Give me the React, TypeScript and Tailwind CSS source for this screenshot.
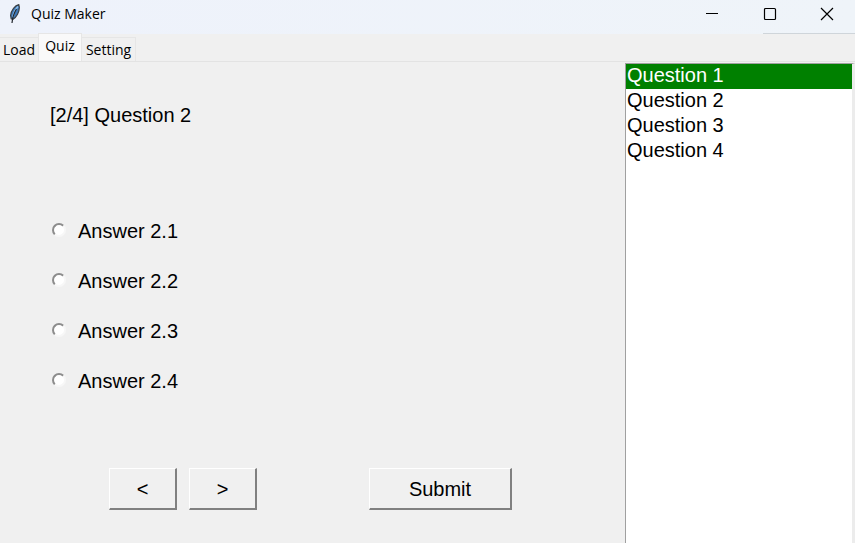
import { useState } from "react";

const answers = ["Answer 2.1", "Answer 2.2", "Answer 2.3", "Answer 2.4"];
const questions = ["Question 1", "Question 2", "Question 3", "Question 4"];

const raised =
  "h-[42px] border-t border-r-2 border-b-2 border-l border-t-white border-l-white border-r-[#808080] border-b-[#808080] bg-[#f0f0f0] text-xl";

function Feather() {
  return (
    <svg width="14" height="20" viewBox="0 0 14 20" aria-hidden="true">
      <path d="M10.800 0.700C7 1.500 3.200 6 2.600 11.500l.6 3.200 1.800 .6C8.500 13 11.500 8 11.300 3z" fill="#3d78b8" stroke="#3a4046" strokeWidth="1.200" />
      <path d="M10 2.500C7.500 5 6 8 4.800 13" fill="none" stroke="#8fc0ee" strokeWidth="1.600" />
      <path d="M8.500 5C6 9 4.600 12 4 19" fill="none" stroke="#20252b" strokeWidth="1.200" />
    </svg>
  );
}

function TitleBar() {
  return (
    <header className="flex h-[34px] flex-col justify-between bg-linear-to-r from-[#eef2fb] to-[#eff4f9]">
      <div className="flex h-7">
        <div className="flex flex-1 items-center gap-[9px] pl-2">
          <Feather />
          <h1 className="font-['Open_Sans',sans-serif] text-sm text-black">Quiz Maker</h1>
        </div>
        <button type="button" aria-label="Minimize" className="flex w-[58px] items-center justify-center">
          <svg width="14" height="14" viewBox="0 0 14 14"><path d="M1 6.500h12" stroke="#000" /></svg>
        </button>
        <button type="button" aria-label="Maximize" className="flex w-[58px] items-center justify-center">
          <svg width="14" height="14" viewBox="0 0 14 14"><rect x="1.500" y="1.500" width="11" height="11" rx="1" fill="none" stroke="#000" strokeWidth="1.200" /></svg>
        </button>
        <button type="button" aria-label="Close" className="flex w-14 items-center justify-center">
          <svg width="14" height="14" viewBox="0 0 14 14"><path d="M1 1l12 12M13 1L1 13" stroke="#000" strokeWidth="1.200" /></svg>
        </button>
      </div>
      <div className="h-px w-[92px] self-end bg-[#cfd5da]" />
    </header>
  );
}

export default function App() {
  const [choice, setChoice] = useState("");

  return (
    <div className="flex min-h-screen flex-col bg-[#f0f0f0] font-['Liberation_Sans',Arial,sans-serif] text-black">
      <TitleBar />
      <nav role="tablist" className="flex h-7 items-end border-b border-[#e3e3e3] font-['Open_Sans',sans-serif] text-sm">
        <button type="button" role="tab" aria-selected="false" className="h-6 w-[38px] border-t border-[#e6e6e6]">Load</button>
        <button type="button" role="tab" aria-selected="true" className="h-7 w-11 border border-b-0 border-[#e6e6e6] bg-[#f9f9f9] pb-1">Quiz</button>
        <button type="button" role="tab" aria-selected="false" className="h-6 w-[54px] border-t border-r border-[#e6e6e6]">Setting</button>
      </nav>
      <div className="flex flex-1">
        <main className="flex-1 pl-[50px] text-xl">
          <h2 className="pt-[38px] leading-[30px]">[2/4] Question 2</h2>
          <div role="radiogroup" aria-label="Answers" className="mt-[76px]">
            {answers.map((answer) => (
              <label key={answer} className="flex h-[50px] items-center gap-3">
                <input
                  type="radio"
                  name="answer"
                  value={answer}
                  checked={choice === answer}
                  onChange={() => setChoice(answer)}
                  className="ml-0.5 size-[14px] -translate-y-px appearance-none rounded-full border-2 border-t-[#8c8c8c] border-r-[#f7f7f7] border-b-[#f7f7f7] border-l-[#8c8c8c] bg-white checked:bg-black"
                />
                {answer}
              </label>
            ))}
          </div>
          <div className="mt-[62px] flex pl-[59px]">
            <button type="button" aria-label="Previous question" className={`${raised} w-[68px]`}>&lt;</button>
            <button type="button" aria-label="Next question" className={`${raised} ml-3 w-[68px]`}>&gt;</button>
            <button type="button" className={`${raised} ml-28 w-[143px]`}>Submit</button>
          </div>
        </main>
        <aside className="flex w-[230px] pt-px">
          <select
            size={4}
            aria-label="Questions"
            className="w-full appearance-none overflow-hidden border-t border-r-3 border-l border-t-[#a0a0a0] border-r-[#ececec] border-l-[#a0a0a0] bg-white text-xl outline-none"
          >
            {questions.map((question, index) => (
              <option
                key={question}
                className={index === 0 ? "h-[25px] bg-[#008000] p-0 pl-px leading-[27px] text-white" : "h-[25px] p-0 pl-px leading-[27px] text-black"}
              >
                {question}
              </option>
            ))}
          </select>
        </aside>
      </div>
    </div>
  );
}
